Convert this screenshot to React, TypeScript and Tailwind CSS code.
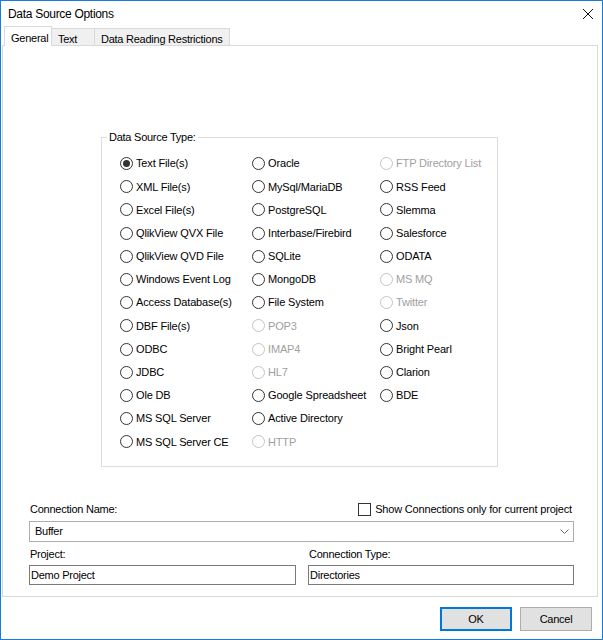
import React from 'react';

type Source = { label: string; checked?: boolean; disabled?: boolean };

const sources: Source[] = [
  // column 1
  { label: 'Text File(s)', checked: true },
  { label: 'XML File(s)' },
  { label: 'Excel File(s)' },
  { label: 'QlikView QVX File' },
  { label: 'QlikView QVD File' },
  { label: 'Windows Event Log' },
  { label: 'Access Database(s)' },
  { label: 'DBF File(s)' },
  { label: 'ODBC' },
  { label: 'JDBC' },
  { label: 'Ole DB' },
  { label: 'MS SQL Server' },
  { label: 'MS SQL Server CE' },
  // column 2
  { label: 'Oracle' },
  { label: 'MySql/MariaDB' },
  { label: 'PostgreSQL' },
  { label: 'Interbase/Firebird' },
  { label: 'SQLite' },
  { label: 'MongoDB' },
  { label: 'File System' },
  { label: 'POP3', disabled: true },
  { label: 'IMAP4', disabled: true },
  { label: 'HL7', disabled: true },
  { label: 'Google Spreadsheet' },
  { label: 'Active Directory' },
  { label: 'HTTP', disabled: true },
  // column 3
  { label: 'FTP Directory List', disabled: true },
  { label: 'RSS Feed' },
  { label: 'Slemma' },
  { label: 'Salesforce' },
  { label: 'ODATA' },
  { label: 'MS MQ', disabled: true },
  { label: 'Twitter', disabled: true },
  { label: 'Json' },
  { label: 'Bright Pearl' },
  { label: 'Clarion' },
  { label: 'BDE' },
];

const Radio: React.FC<Source> = ({ label, checked, disabled }) => (
  <div className="flex items-center h-[23.2px]">
    <span
      className={`w-[13px] h-[13px] rounded-full border bg-white flex items-center justify-center shrink-0 ${
        disabled ? 'border-[#c4c4c4]' : 'border-[#333333]'
      }`}
    >
      {checked && <span className="w-[7px] h-[7px] rounded-full bg-[#333333]" />}
    </span>
    <span className={`ml-[3px] whitespace-nowrap tracking-[-0.15px] ${disabled ? 'text-[#a0a0a0]' : 'text-black'}`}>{label}</span>
  </div>
);

const App: React.FC = () => {
  return (
    <div className="w-[603px] h-[640px] border border-[#1c7bd2] bg-white flex flex-col font-['Liberation_Sans',Arial,sans-serif] text-[11px] tracking-[-0.25px] text-black overflow-hidden">
      {/* title bar */}
      <div className="h-[25px] flex items-center justify-between pl-[7px] pr-[7px] shrink-0">
        <span className="text-[12px] tracking-[-0.3px]">Data Source Options</span>
        <svg width="12" height="12" viewBox="0 0 12 12" className="mr-[1px]">
          <path d="M1 1 L11 11 M11 1 L1 11" stroke="#111" strokeWidth="1" fill="none" />
        </svg>
      </div>

      {/* tabs */}
      <div className="h-[19px] flex items-end pl-[3px] shrink-0 relative z-10">
        <div className="w-[48px] h-[20px] -mb-px bg-white border border-b-0 border-[#d9d9d9] pl-[6px] pt-[3px]">General</div>
        <div className="w-[43px] h-[17px] bg-[#f0f0f0] border border-b-0 border-l-0 border-[#d9d9d9] pl-[6px] pt-[2px]">Text</div>
        <div className="w-[135px] h-[17px] bg-[#f0f0f0] border border-b-0 border-l-0 border-[#d9d9d9] pl-[6px] pt-[2px]">Data Reading Restrictions</div>
      </div>

      {/* tab panel */}
      <div className="h-[552px] ml-[1px] mr-[4px] border border-[#d9d9d9] bg-white shrink-0 flex flex-col">
        <div className="ml-[98px] mt-[91px] w-[397px] h-[330px] border border-[#dcdcdc] relative">
          <span className="absolute left-[5px] -top-[8px] bg-white px-[2px] leading-[14px]">Data Source Type:</span>
          <div className="grid grid-flow-col grid-rows-[repeat(13,23.2px)] grid-cols-[132px_128px_1fr] pl-[18px] pt-[14px]">
            {sources.map((s) => (
              <Radio key={s.label} {...s} />
            ))}
          </div>
        </div>

        <div className="pl-[26px] pr-[23px] mt-[35px]">
          <div className="h-[14px] flex items-center justify-between">
            <span className="pl-[1px]">Connection Name:</span>
            <div className="flex items-center pr-[2px]">
              <span className="w-[13px] h-[13px] border border-[#333333] bg-white" />
              <span className="ml-[4px] tracking-[-0.18px]">Show Connections only for current project</span>
            </div>
          </div>
          <div className="mt-[5px] h-[21px] border border-[#adadad] bg-white flex items-center justify-between pl-[5px] pr-[4px]">
            <span>Buffer</span>
            <svg width="9" height="6" viewBox="0 0 9 6">
              <path d="M0.5 0.5 L4.5 4.5 L8.5 0.5" stroke="#666" strokeWidth="1" fill="none" />
            </svg>
          </div>
          <div className="mt-[5px] flex justify-between">
            <div className="w-[267px]">
              <div className="h-[14px] leading-[14px] pl-[1px]">Project:</div>
              <div className="mt-[4px] h-[20px] border border-[#7a7a7a] bg-white flex items-center pl-[1px]">Demo Project</div>
            </div>
            <div className="w-[266px]">
              <div className="h-[14px] leading-[14px] pl-[1px]">Connection Type:</div>
              <div className="mt-[4px] h-[20px] border border-[#7a7a7a] bg-white flex items-center pl-[1px]">Directories</div>
            </div>
          </div>
        </div>
      </div>

      {/* buttons */}
      <div className="flex justify-end gap-[8px] pr-[10px] pt-[10px]">
        <button className="w-[72px] h-[24px] bg-[#e1e1e1] border-2 border-[#0078d7] tracking-[-0.25px]">OK</button>
        <button className="w-[72px] h-[24px] bg-[#e1e1e1] border border-[#adadad] tracking-[-0.25px]">Cancel</button>
      </div>
    </div>
  );
};

export default App;
